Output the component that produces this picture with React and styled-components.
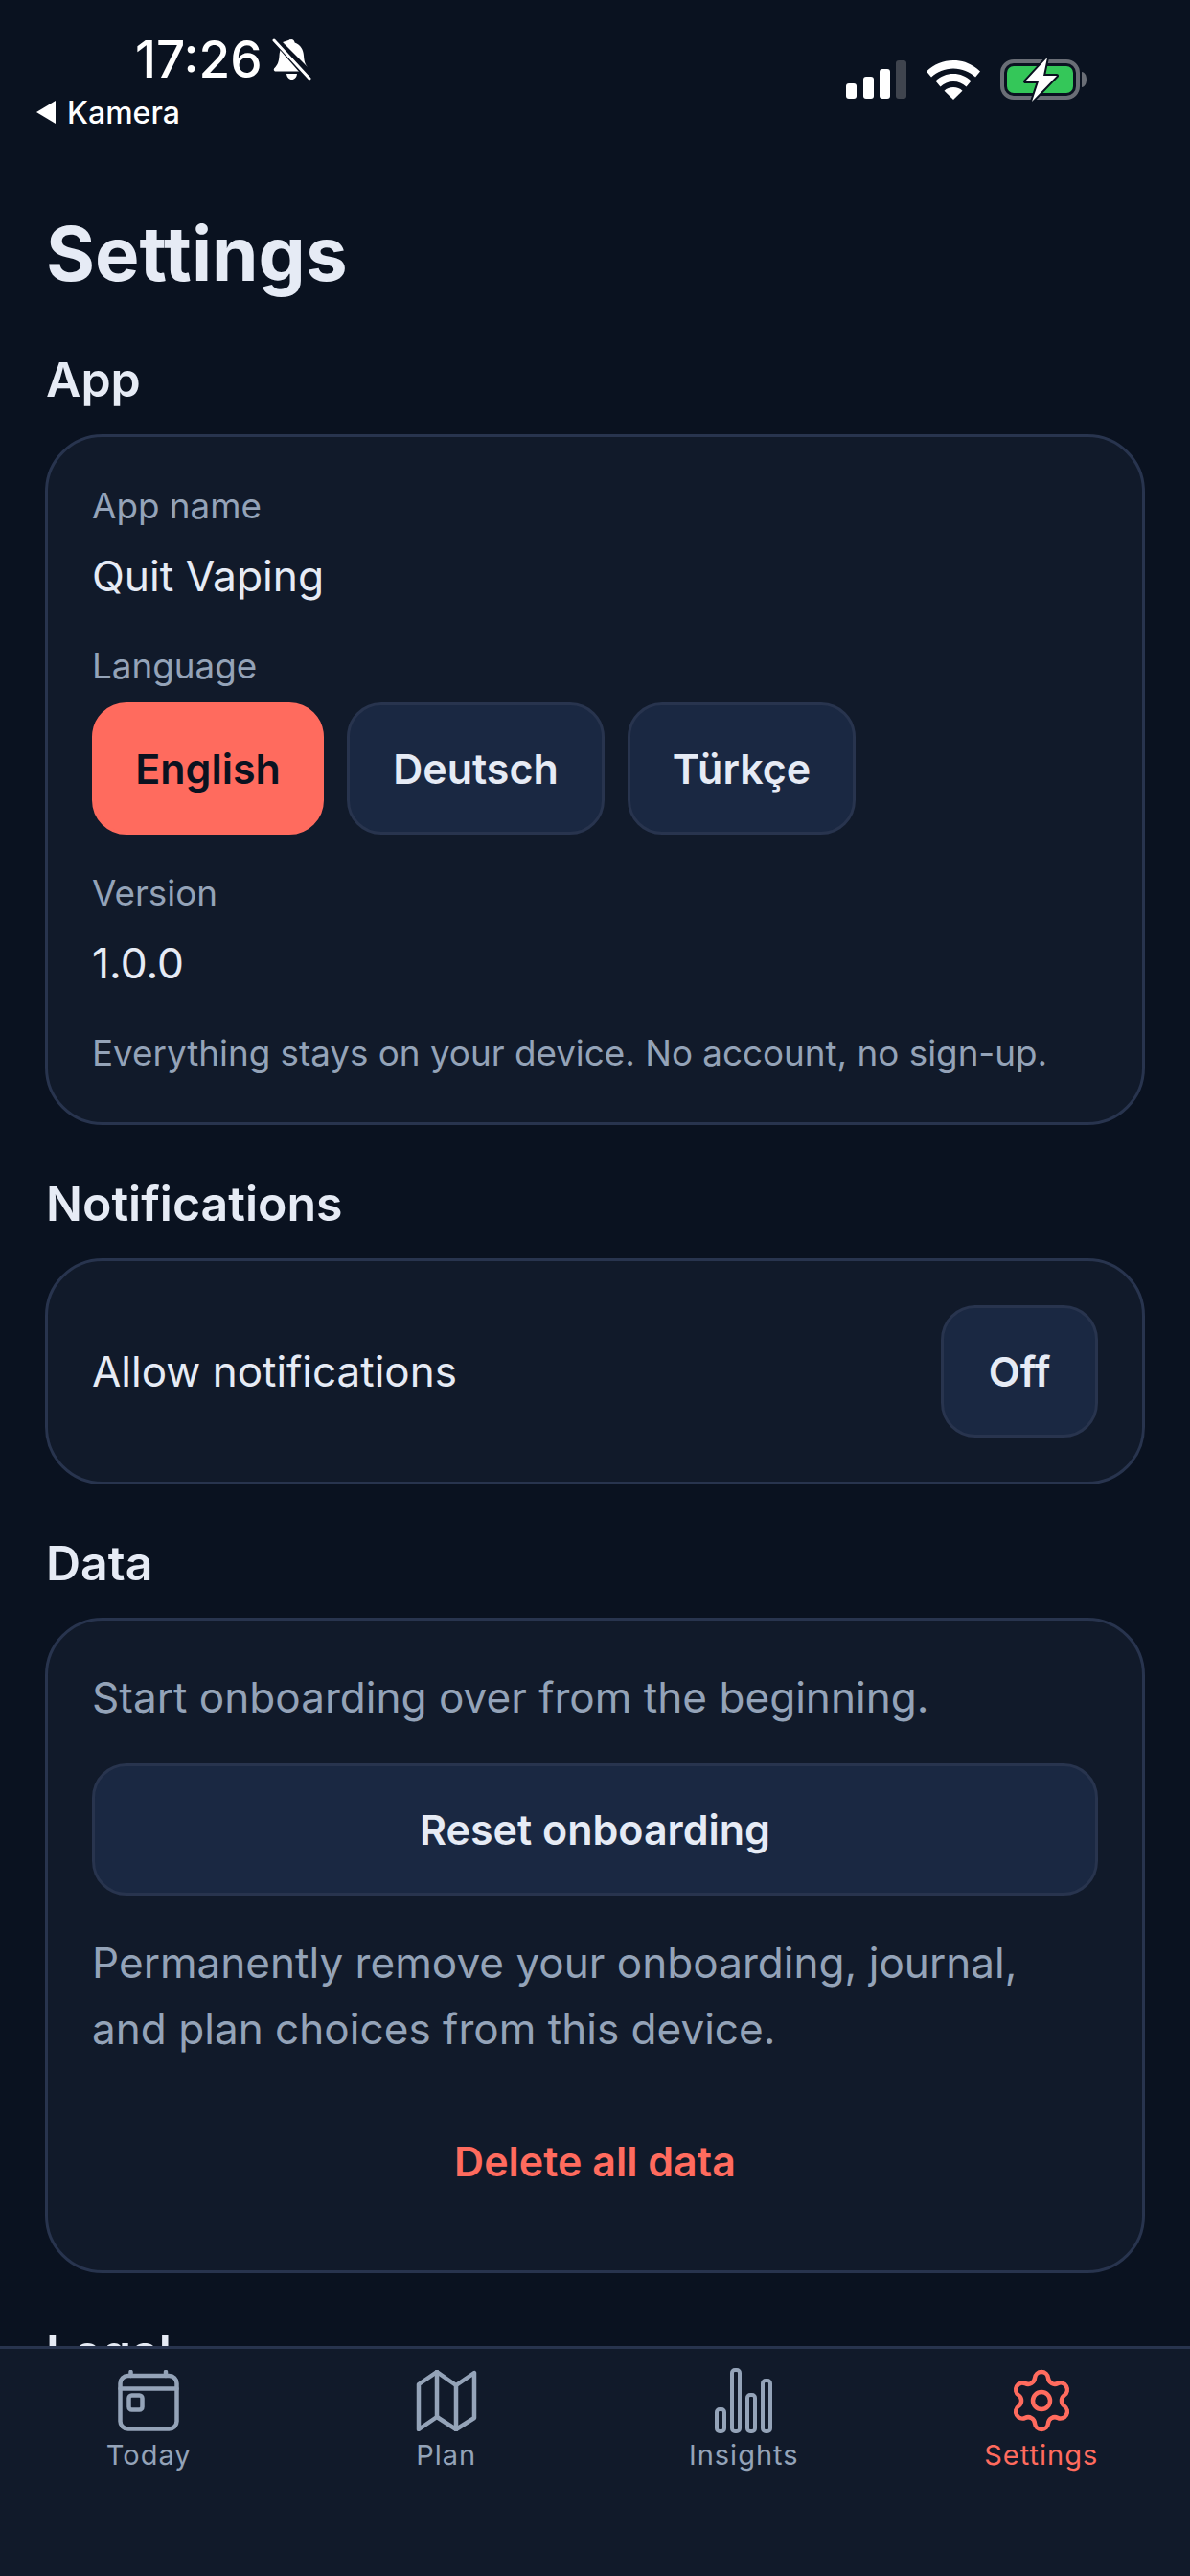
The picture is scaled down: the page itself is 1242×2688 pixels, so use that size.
import React from 'react';
import styled, { createGlobalStyle } from 'styled-components';
import { Settings as Gear } from 'lucide-react';

const Global = createGlobalStyle`
    html, body { margin: 0; padding: 0; background: #0a1220; }
    * { box-sizing: border-box; }
    body { font-family: Inter, "Noto Sans", sans-serif; }
`;

function BellOff() {
    return (
        <svg width="42" height="44" viewBox="0 0 42 44">
            <path d="M20 1c-2 0-3.500 1.500-3.600 3.600C10 6.500 8 12 7.500 18c-.4 6-1.500 9.500-5 13-1.500 1.500-.6 3.500 1.500 3.500h26L10 8" fill="#fff" />
            <path d="M20 1c2 0 3.500 1.500 3.600 3.600 6.500 2 9 8 9.400 13.400.4 6 1.500 9 4 12L11 4" fill="#fff" />
            <path d="M15 37h11c-.4 3.500-2.500 6-5.500 6s-5-2.500-5.500-6z" fill="#fff" />
            <path d="M3 1l36 41" stroke="#0a1220" strokeWidth="7" />
            <path d="M2 2l37 40" stroke="#fff" strokeWidth="3" strokeLinecap="round" />
        </svg>
    );
}

function Signal() {
    return (
        <svg width="63" height="40" viewBox="0 0 63 40">
            <rect x="0" y="24" width="11" height="16" rx="3" fill="#fff" />
            <rect x="18" y="17" width="11" height="23" rx="3" fill="#fff" />
            <rect x="35" y="9" width="11" height="31" rx="3" fill="#fff" />
            <rect x="52" y="0" width="11" height="40" rx="3" fill="#3f444e" />
        </svg>
    );
}

function Wifi() {
    return (
        <svg width="56" height="41" viewBox="0 0 56 41">
            <path d="M28 0C17 0 8 4 0 11.500l5 6C11 12 19 8.500 28 8.500s17 3.500 23 9l5-6C48 4 39 0 28 0z" fill="#fff" />
            <path d="M28 14c-7 0-13.500 2.500-18.500 7.500l5 6C18 24 23 22 28 22s10 2 13.500 5.500l5-6C41.500 16.500 35 14 28 14z" fill="#fff" />
            <path d="M28 28c-3.800 0-7 1.300-9.500 3.700L28 41l9.500-9.300C35 29.300 31.800 28 28 28z" fill="#fff" />
        </svg>
    );
}

function Battery() {
    return (
        <svg width="90" height="46" viewBox="0 0 90 46">
            <rect x="2" y="4" width="79" height="38" rx="12" fill="none" stroke="#6a6e76" strokeWidth="4" />
            <rect x="7" y="9" width="69" height="28" rx="7" fill="#34c759" />
            <path d="M85 15c3 .5 5 3.500 5 8s-2 7.500-5 8z" fill="#6a6e76" />
            <path d="M49 0L26 25h14l-7 21 26-27H45z" fill="#fff" stroke="#0a1220" strokeWidth="4" strokeLinejoin="round" paintOrder="stroke" />
        </svg>
    );
}

function TodayIcon() {
    return (
        <svg width="64" height="64" viewBox="0 0 64 64" fill="none" stroke="currentColor" strokeWidth="4.500" strokeLinecap="round" strokeLinejoin="round">
            <rect x="2.500" y="6" width="59" height="55.500" rx="8" />
            <path d="M2.500 19.500h59M13.500 2v4M50 2v4" />
            <rect x="11.500" y="26.500" width="14" height="15" rx="3" />
        </svg>
    );
}

function PlanIcon() {
    return (
        <svg width="64" height="64" viewBox="0 0 64 64" fill="none" stroke="currentColor" strokeWidth="4.500" strokeLinecap="round" strokeLinejoin="round">
            <path d="M3 15L22 2l20 14L61 3v47L42 62 22 49 3 62z" />
            <path d="M22 2v47M42 16v46" />
        </svg>
    );
}

function InsightsIcon() {
    return (
        <svg width="62" height="68" viewBox="0 0 62 68" fill="none" stroke="currentColor" strokeWidth="4">
            <rect x="3" y="43" width="8" height="23" rx="3" />
            <rect x="19" y="2" width="8" height="64" rx="3" />
            <rect x="35" y="28" width="8" height="38" rx="3" />
            <rect x="51" y="13" width="8" height="53" rx="3" />
        </svg>
    );
}

const tabs = [
    { id: 1, label: 'Today', Icon: TodayIcon },
    { id: 2, label: 'Plan', Icon: PlanIcon },
    { id: 3, label: 'Insights', Icon: InsightsIcon },
    { id: 4, label: 'Settings', Icon: () => <Gear size={72} strokeWidth={1.500} />, active: true },
];

function App() {
    return (
        <>
            <Global />
            <Phone>
                <Scroll>
                    <StatusBar>
                        <StatusLeft>
                            <TimeRow>
                                <Time>17:26</Time>
                                <BellOff />
                            </TimeRow>
                            <BackRow>
                                <BackArrow />
                                <BackText>Kamera</BackText>
                            </BackRow>
                        </StatusLeft>
                        <StatusRight>
                            <Signal />
                            <Wifi />
                            <Battery />
                        </StatusRight>
                    </StatusBar>

                    <Title>Settings</Title>

                    <SectionTitle $top={50}>App</SectionTitle>
                    <Card>
                        <Label $top={2}>App name</Label>
                        <Value>Quit Vaping</Value>
                        <Label $top={43}>Language</Label>
                        <Chips>
                            <Chip $active $w={242}>English</Chip>
                            <Chip $w={269}>Deutsch</Chip>
                            <Chip $w={238}>Türkçe</Chip>
                        </Chips>
                        <Label $top={37}>Version</Label>
                        <Value>1.0.0</Value>
                        <Hint>Everything stays on your device. No account, no sign-up.</Hint>
                    </Card>

                    <SectionTitle $top={51}>Notifications</SectionTitle>
                    <ToggleCard>
                        <ToggleText>Allow notifications</ToggleText>
                        <Chip $w={164}>Off</Chip>
                    </ToggleCard>

                    <SectionTitle $top={51}>Data</SectionTitle>
                    <DataCard>
                        <Body>Start onboarding over from the beginning.</Body>
                        <WideButton>Reset onboarding</WideButton>
                        <Body $top={36}>Permanently remove your onboarding, journal,<br />and plan choices from this device.</Body>
                        <Danger>Delete all data</Danger>
                    </DataCard>

                    <SectionTitle $top={51}>Legal</SectionTitle>
                </Scroll>
                <TabBar>
                    {tabs.map((tab) => (
                        <Tab key={tab.id} $active={tab.active}>
                            <TabIcon><tab.Icon /></TabIcon>
                            <TabLabel>{tab.label}</TabLabel>
                        </Tab>
                    ))}
                </TabBar>
            </Phone>
        </>
    );
}

const Phone = styled.div`
    width: 1242px;
    height: 2688px;
    display: flex;
    flex-direction: column;
    overflow: hidden;
    background: #0a1220;
`;
const Scroll = styled.main`
    flex: 1;
    min-height: 0;
    overflow: hidden;
    padding: 0 47px;
`;
const StatusBar = styled.div`
    height: 142px;
    margin: 0 -9px;
    padding: 34px 0 0 0;
    display: flex;
    justify-content: space-between;
    align-items: flex-start;
`;
const StatusLeft = styled.div`
    display: flex;
    flex-direction: column;
`;
const TimeRow = styled.div`
    display: flex;
    align-items: center;
    gap: 10px;
    padding-left: 103px;
    height: 56px;
`;
const Time = styled.span`
    color: #fff;
    font-size: 53px;
    font-weight: 500;
    line-height: 56px;
`;
const BackRow = styled.div`
    display: flex;
    align-items: center;
    gap: 12px;
    height: 40px;
    margin-top: 7px;
`;
const BackArrow = styled.span`
    width: 0;
    height: 0;
    border-style: solid;
    border-width: 12px 20px 12px 0;
    border-color: transparent #fff transparent transparent;
`;
const BackText = styled.span`
    color: #fff;
    font-size: 32px;
    font-weight: 500;
`;
const StatusRight = styled.div`
    display: flex;
    align-items: center;
    gap: 21px;
    padding: 26px 70px 0 0;
`;
const Title = styled.h1`
    margin: 73px 0 0 1px;
    font-size: 78px;
    line-height: 100px;
    font-weight: 700;
    color: #e6ebf5;
`;
const SectionTitle = styled.h2`
    margin: ${(p) => p.$top ?? 30}px 0 0 1px;
    font-size: 50px;
    line-height: 62px;
    font-weight: 600;
    color: #e6ebf5;
`;
const Card = styled.section`
    margin-top: 26px;
    padding: 46px;
    background: #111a2a;
    border: 3px solid #28344e;
    border-radius: 60px;
`;
const Label = styled.div`
    margin-top: ${(p) => p.$top ?? 0}px;
    font-size: 36.800px;
    line-height: 48px;
    color: #94a3b8;
`;
const Value = styled.div`
    margin-top: 22px;
    font-size: 44.300px;
    line-height: 54px;
    color: #e6ebf5;
`;
const Chips = styled.div`
    display: flex;
    gap: 24px;
    margin-top: 14px;
`;
const Chip = styled.button`
    width: ${(p) => p.$w}px;
    height: 138px;
    flex: none;
    padding: 0;
    font: 600 43px Inter, sans-serif;
    color: ${(p) => (p.$active ? '#0a1220' : '#e6ebf5')};
    background: ${(p) => (p.$active ? '#ff6b5e' : '#1a2842')};
    border: 3px solid ${(p) => (p.$active ? '#ff6b5e' : '#28344e')};
    border-radius: 36px;
`;
const Hint = styled.p`
    margin: 43px 0 2px;
    font-size: 36.800px;
    line-height: 48px;
    color: #94a3b8;
    white-space: nowrap;
`;
const ToggleCard = styled(Card)`
    display: flex;
    justify-content: space-between;
    align-items: center;
`;
const ToggleText = styled.span`
    font-size: 44px;
    color: #e6ebf5;
`;
const DataCard = styled(Card)`
    height: 684px;
`;
const Body = styled.p`
    margin: ${(p) => p.$top ?? 0}px 0 0;
    font-size: 44.100px;
    line-height: 69px;
    color: #94a3b8;
    white-space: nowrap;
`;
const WideButton = styled.button`
    display: block;
    width: 100%;
    height: 138px;
    margin-top: 34px;
    font: 600 43px Inter, sans-serif;
    color: #e6ebf5;
    background: #1a2842;
    border: 3px solid #28344e;
    border-radius: 36px;
`;
const Danger = styled.div`
    margin-top: 76px;
    text-align: center;
    font-size: 43px;
    line-height: 54px;
    font-weight: 600;
    color: #ff6b5e;
`;
const TabBar = styled.nav`
    height: 240px;
    flex: none;
    display: grid;
    grid-template-columns: repeat(4, 1fr);
    background: #111a2a;
    border-top: 3px solid #28344e;
`;
const Tab = styled.div`
    display: flex;
    flex-direction: column;
    align-items: center;
    padding-top: 18px;
    color: ${(p) => (p.$active ? '#ff6b5e' : '#94a3b8')};
`;
const TabIcon = styled.div`
    height: 72px;
    display: flex;
    align-items: center;
    justify-content: center;
`;
const TabLabel = styled.span`
    margin-top: 3px;
    font-size: 29px;
    line-height: 36px;
    font-weight: 400;
    letter-spacing: 1px;
`;

export default App;
